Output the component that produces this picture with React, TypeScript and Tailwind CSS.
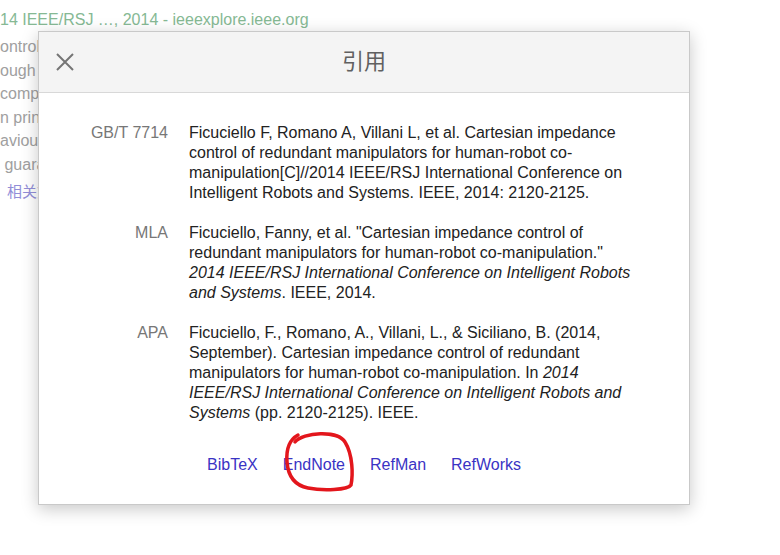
const bgLines = [
  'ontrol of redundant manipulators',
  'ough contact with the robot',
  'complex tasks in which',
  'n principle the robot',
  'aviour of the end effector',
  ' guarantee the stability',
];

const citations = [
  {
    label: 'GB/T 7714',
    body: (
      <>
        Ficuciello F, Romano A, Villani L, et al. Cartesian impedance control of redundant manipulators for human-robot co-manipulation[C]//2014 IEEE/RSJ International Conference on Intelligent Robots and Systems. IEEE, 2014: 2120-2125.
      </>
    ),
  },
  {
    label: 'MLA',
    body: (
      <>
        Ficuciello, Fanny, et al. "Cartesian impedance control of redundant manipulators for human-robot co-manipulation." <i>2014 IEEE/RSJ International Conference on Intelligent Robots and Systems</i>. IEEE, 2014.
      </>
    ),
  },
  {
    label: 'APA',
    body: (
      <>
        Ficuciello, F., Romano, A., Villani, L., &amp; Siciliano, B. (2014, September). Cartesian impedance control of redundant manipulators for human-robot co-manipulation. In <i>2014 IEEE/RSJ International Conference on Intelligent Robots and Systems</i> (pp. 2120-2125). IEEE.
      </>
    ),
  },
];

const exports = ['BibTeX', 'EndNote', 'RefMan', 'RefWorks'];

export default function App() {
  return (
    <div className="relative w-full h-[555px] overflow-hidden bg-white font-['Liberation_Sans',Arial,sans-serif] text-[16px]">
      {/* page behind the modal */}
      <div className="pt-[10px] whitespace-nowrap">
        <div className="leading-[20px] text-[#86b994]">14 IEEE/RSJ …, 2014 - ieeexplore.ieee.org</div>
        <div className="mt-[5px] text-[#a0a0a0]">
          {bgLines.map((l) => (
            <div key={l} className="leading-[23.5px] whitespace-pre">{l}</div>
          ))}
          <div className="mt-[3px] pl-[7px] leading-[23.5px] text-[#928ed8] font-['Noto_Sans_CJK_SC',sans-serif] text-[15px]">相关文章</div>
        </div>
      </div>

      {/* cite dialog */}
      <div className="absolute left-[38px] top-[31px] w-[652px] border border-[#c9c9c9] bg-white shadow-[0_4px_16px_rgba(0,0,0,0.22)]">
        <div className="relative flex h-[61px] items-center justify-center border-b border-[#d8d8d8] bg-[#f4f4f4]">
          <button className="absolute left-[17px] top-[21px] flex h-[18px] w-[18px] items-center justify-center">
            <svg width="18" height="18" viewBox="0 0 18 18" fill="none" stroke="#757575" strokeWidth="2">
              <path d="M1 1 L17 17 M17 1 L1 17" />
            </svg>
          </button>
          <h2 className="mb-[6px] text-[22px] text-[#606060] font-['Noto_Sans_CJK_SC','Liberation_Sans',sans-serif] leading-none">引用</h2>
        </div>

        <div className="pt-[30px] pb-[29px]">
          <div className="flex flex-col gap-[20px]">
            {citations.map((c) => (
              <div key={c.label} className="flex leading-[20px]">
                <div className="w-[129px] shrink-0 text-right text-[#777]">{c.label}</div>
                <div className="ml-[21px] w-[451px] text-[#222]">{c.body}</div>
              </div>
            ))}
          </div>

          <div className="relative mt-[32px] flex justify-center gap-[25px] leading-[20px]">
            {exports.map((e) => (
              <a key={e} href="#" className="text-[#3a33c4]">{e}</a>
            ))}
          </div>
        </div>
      </div>

      {/* hand-drawn annotation */}
      <svg className="absolute left-[283px] top-[430px]" width="76" height="66" viewBox="0 0 76 66" fill="none">
        <path
          d="M12 12 C20 2, 55 0, 62 12 C70 25, 70 45, 68 55 C65 60, 40 61, 25 58 C10 55, 5 45, 4 32 C3 20, 6 10, 15 5"
          stroke="#e3161c"
          strokeWidth="3.5"
          strokeLinecap="round"
        />
      </svg>
    </div>
  );
}
